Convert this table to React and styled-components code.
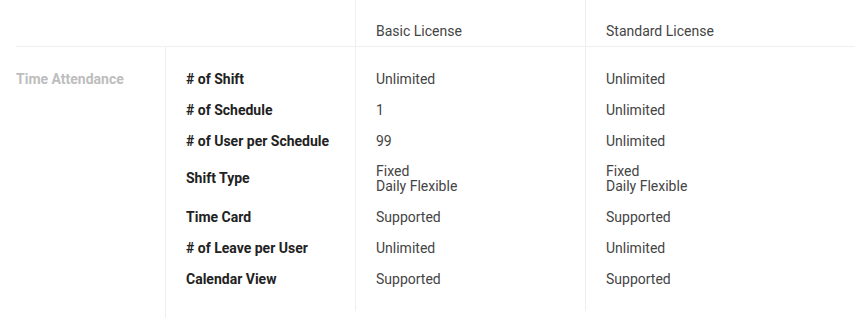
import React from "react";
import styled, { createGlobalStyle } from "styled-components";

const Global = createGlobalStyle`
  html, body { margin: 0; padding: 0; background: #fff; }
  body { font-family: Roboto, "Liberation Sans", Arial, sans-serif; font-size: 14px; }
`;

const Table = styled.div`
  padding-left: 16px;
  width: 839px;
`;

const HeaderRow = styled.div`
  display: grid;
  grid-template-columns: 149px 190px 230px 1fr;
  height: 46px;
  border-bottom: 1px solid #efefef;
`;

const HeaderCell = styled.div`
  display: flex;
  align-items: flex-end;
  padding: 0 0 7px 20px;
  line-height: 16px;
  color: #444;
  border-left: ${(p) => (p.$line ? "1px solid #efefef" : "none")};
`;

const Body = styled.div`
  display: grid;
  grid-template-columns: 149px 190px 230px 1fr;
  align-items: start;
`;

const SectionLabel = styled.div`
  padding-top: 16px;
  height: 31px;
  display: flex;
  align-items: center;
  color: #bdbdbd;
  font-weight: 700;
  line-height: 16px;
`;

const Column = styled.div`
  border-left: 1px solid #efefef;
  padding: 16px 0 ${(p) => p.$bottom}px 20px;
`;

const Cell = styled.div`
  height: ${(p) => (p.$tall ? 45 : 31)}px;
  display: flex;
  flex-direction: column;
  justify-content: center;
  line-height: ${(p) => (p.$tall ? 15 : 16)}px;
  color: ${(p) => (p.$label ? "#222" : "#444")};
  font-weight: ${(p) => (p.$label ? 700 : 400)};
  white-space: nowrap;
`;

const features = [
  { label: "# of Shift", basic: ["Unlimited"], standard: ["Unlimited"] },
  { label: "# of Schedule", basic: ["1"], standard: ["Unlimited"] },
  { label: "# of User per Schedule", basic: ["99"], standard: ["Unlimited"] },
  { label: "Shift Type", basic: ["Fixed", "Daily Flexible"], standard: ["Fixed", "Daily Flexible"] },
  { label: "Time Card", basic: ["Supported"], standard: ["Supported"] },
  { label: "# of Leave per User", basic: ["Unlimited"], standard: ["Unlimited"] },
  { label: "Calendar View", basic: ["Supported"], standard: ["Supported"] },
];

const isTall = (f) => f.basic.length > 1;

export default function App() {
  return (
    <>
      <Global />
      <Table>
        <HeaderRow>
          <HeaderCell />
          <HeaderCell />
          <HeaderCell $line>Basic License</HeaderCell>
          <HeaderCell $line>Standard License</HeaderCell>
        </HeaderRow>
        <Body>
          <SectionLabel>Time Attendance</SectionLabel>
          <Column $bottom={24}>
            {features.map((f) => (
              <Cell key={f.label} $label $tall={isTall(f)}>
                {f.label}
              </Cell>
            ))}
          </Column>
          <Column $bottom={17}>
            {features.map((f) => (
              <Cell key={f.label} $tall={isTall(f)}>
                {f.basic.map((v) => (
                  <span key={v}>{v}</span>
                ))}
              </Cell>
            ))}
          </Column>
          <Column $bottom={17}>
            {features.map((f) => (
              <Cell key={f.label} $tall={isTall(f)}>
                {f.standard.map((v) => (
                  <span key={v}>{v}</span>
                ))}
              </Cell>
            ))}
          </Column>
        </Body>
      </Table>
    </>
  );
}
